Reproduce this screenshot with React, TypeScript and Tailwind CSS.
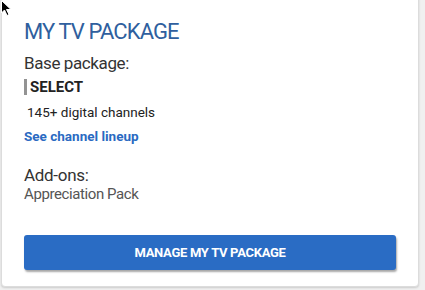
import React from 'react';

function Cursor() {
  return (
    <svg className="absolute left-[1px] top-0" width="12" height="17" viewBox="0 0 12 17">
      <path d="M0.5 0.5 L0.5 13 L3.5 10 L6 15.5 L8 14.5 L5.5 9.5 L10 9.5 Z" fill="#000" stroke="#fff" strokeWidth="1" />
    </svg>
  );
}

export default function App() {
  return (
    <div className="relative w-[425px] h-[290px] overflow-hidden bg-[#f0f0f0] font-['Roboto','Liberation_Sans',sans-serif]">
      <div className="ml-[1px] -mt-[6px] w-[418px] h-[293px] bg-white border border-[#dcdcdc] rounded-[4px] shadow-[0_1px_2px_rgba(0,0,0,0.15)] pl-[22px] pr-[21px] pt-[24px]">
        <h2 className="text-[22px] leading-[26px] text-[#2f5f9e] tracking-[-0.9px]">MY TV PACKAGE</h2>
        <div className="mt-[7px] text-[17px] leading-[22px] text-[#333] tracking-[-0.4px]">Base package:</div>
        <div className="mt-[4px] flex items-center gap-[3px]">
          <span className="w-[3px] h-[16px] bg-[#939393]" />
          <span className="text-[15px] leading-[18px] font-bold text-[#222]">SELECT</span>
        </div>
        <div className="mt-[7px] pl-[3px] text-[13.5px] leading-[18px] text-[#222]">145+ digital channels</div>
        <a className="block mt-[6px] text-[13.5px] leading-[18px] font-bold text-[#2a6ac2]">See channel lineup</a>
        <div className="mt-[19px] text-[17px] leading-[22px] text-[#333] tracking-[-0.3px]">Add-ons:</div>
        <div className="-mt-[2px] text-[15px] leading-[20px] text-[#555] tracking-[-0.4px]">Appreciation Pack</div>
        <button className="mt-[31px] w-[372px] h-[35px] rounded-[3px] bg-[#2a6cc4] shadow-[1px_2px_2px_rgba(0,0,0,0.35)] text-white text-[13px] font-bold tracking-[-0.3px]">
          MANAGE MY TV PACKAGE
        </button>
      </div>
      <Cursor />
    </div>
  );
}
